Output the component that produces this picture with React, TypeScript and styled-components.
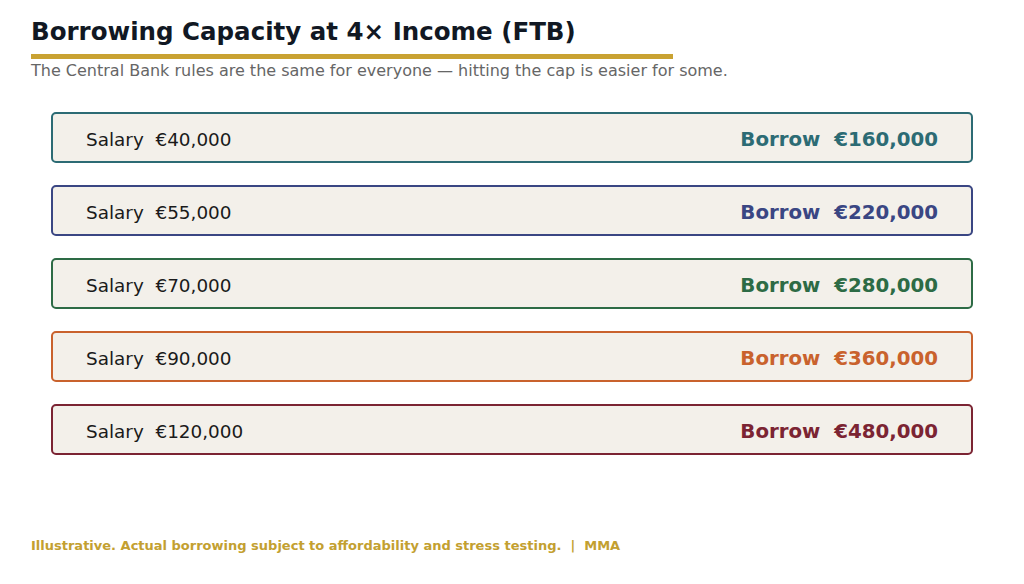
import React from "react";
import styled, { createGlobalStyle } from "styled-components";

const Global = createGlobalStyle`
  html, body { margin: 0; padding: 0; background: #ffffff; }
  body { font-family: "DejaVu Sans", "Liberation Sans", sans-serif; }
`;

const Page = styled.div`
  box-sizing: border-box;
  width: 1024px;
  height: 584px;
  padding: 17px 31px 30px;
  display: flex;
  flex-direction: column;
  background: #ffffff;
`;

const Title = styled.h1`
  margin: 0;
  font-size: 24.5px;
  line-height: 30px;
  font-weight: 700;
  color: #111823;
`;

const Rule = styled.div`
  width: 642px;
  height: 5px;
  margin-top: 7px;
  background: #c9a232;
`;

const Subtitle = styled.p`
  margin: 2px 0 0;
  font-size: 16px;
  line-height: 20px;
  color: #666666;
`;

const List = styled.div`
  display: flex;
  flex-direction: column;
  gap: 22px;
  margin-top: 31px;
  padding: 0 20px;
`;

const Row = styled.div<{ $c: string }>`
  box-sizing: border-box;
  height: 51px;
  display: flex;
  align-items: center;
  justify-content: space-between;
  padding: 3px 33px 0;
  border: 2px solid ${(p) => p.$c};
  border-radius: 5px;
  background: #f3f0ea;
`;

const Salary = styled.span`
  font-size: 18.4px;
  color: #1a1a1a;
  white-space: pre;
`;

const Borrow = styled.span<{ $c: string }>`
  font-size: 19.8px;
  font-weight: 700;
  color: ${(p) => p.$c};
  white-space: pre;
`;

const Footer = styled.div`
  margin-top: auto;
  font-size: 13px;
  line-height: 16px;
  font-weight: 700;
  color: #c3a030;
  white-space: pre;
`;

const rows = [
  { salary: "€40,000", borrow: "€160,000", c: "#2c6b74" },
  { salary: "€55,000", borrow: "€220,000", c: "#3a4683" },
  { salary: "€70,000", borrow: "€280,000", c: "#2d6b45" },
  { salary: "€90,000", borrow: "€360,000", c: "#c9622d" },
  { salary: "€120,000", borrow: "€480,000", c: "#7b2433" },
];

export default function App() {
  return (
    <>
      <Global />
      <Page>
        <Title>Borrowing Capacity at 4× Income (FTB)</Title>
        <Rule />
        <Subtitle>
          The Central Bank rules are the same for everyone — hitting the cap is easier for some.
        </Subtitle>
        <List>
          {rows.map((r) => (
            <Row key={r.salary} $c={r.c}>
              <Salary>{`Salary  ${r.salary}`}</Salary>
              <Borrow $c={r.c}>{`Borrow  ${r.borrow}`}</Borrow>
            </Row>
          ))}
        </List>
        <Footer>{"Illustrative. Actual borrowing subject to affordability and stress testing.  |  MMA"}</Footer>
      </Page>
    </>
  );
}
